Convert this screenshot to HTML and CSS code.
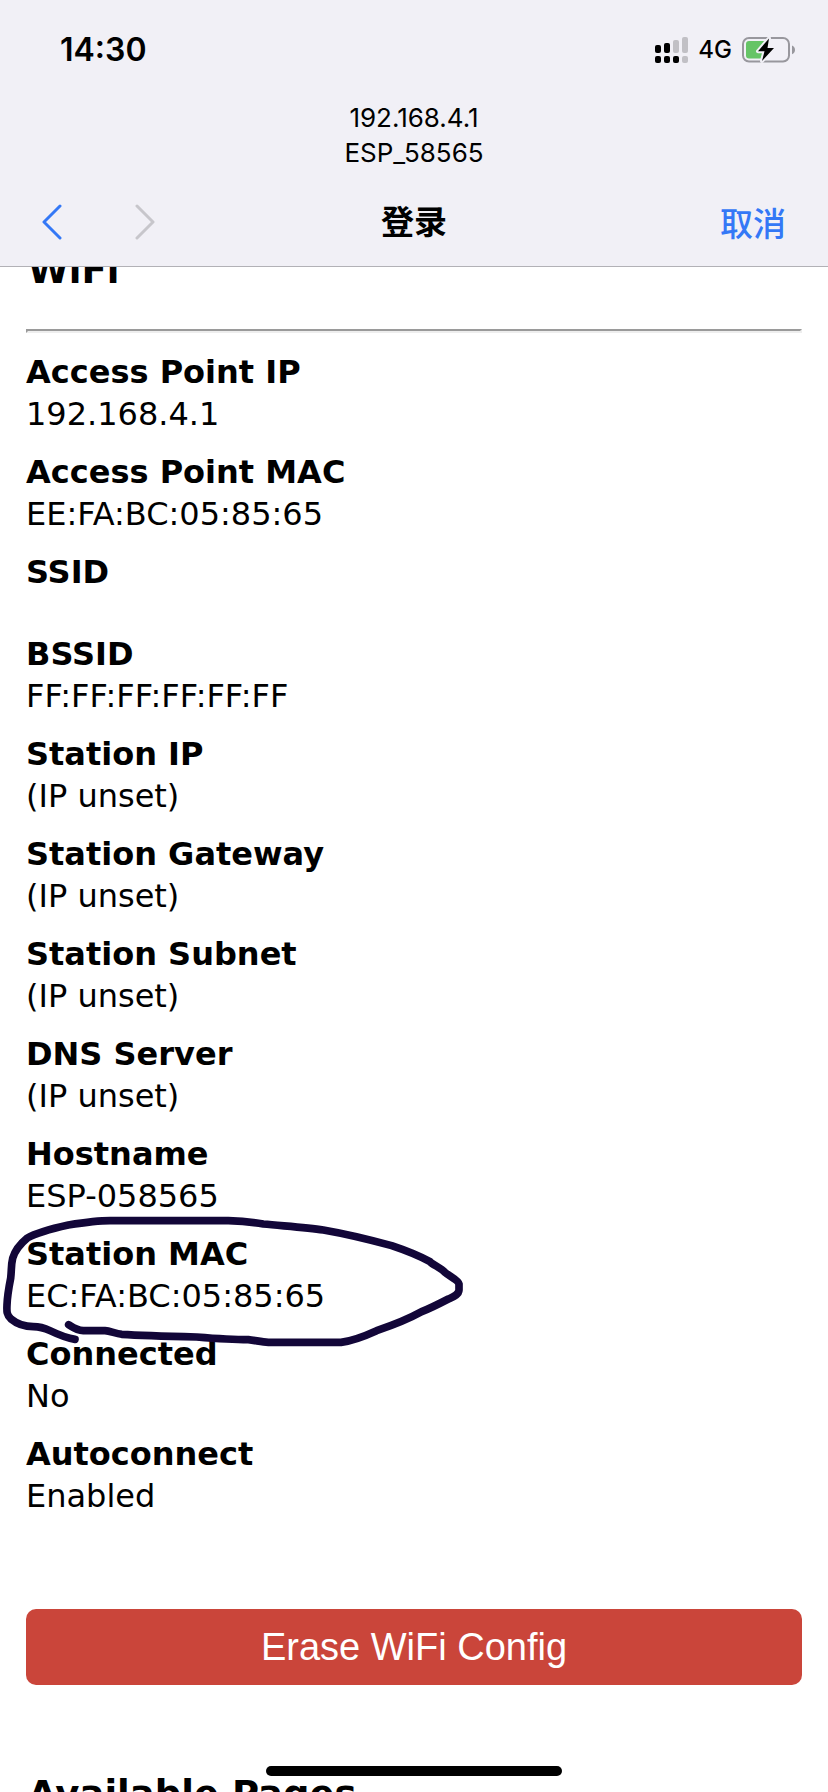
FILE: index.html
```html
<!DOCTYPE html>
<html lang="zh-CN">
<head>
<meta charset="utf-8">
<meta name="viewport" content="width=device-width">
<title>登录</title>
<link rel="stylesheet" href="styles.css">
</head>
<body>
<header class="top">
  <div class="status">
    <time class="clock">14:30</time>
    <div class="indicators">
      <svg class="signal" viewBox="0 0 33 26" aria-hidden="true">
        <g fill="#000"><rect x="0" y="8" width="6" height="8" rx="2"/><rect x="9" y="6" width="6" height="10" rx="2"/><rect x="0" y="19" width="6" height="7" rx="2"/><rect x="9" y="19" width="6" height="7" rx="2"/><rect x="18" y="19" width="6" height="7" rx="2"/></g>
        <g fill="#c1c0c5"><rect x="18" y="3" width="6" height="13" rx="2"/><rect x="27" y="0" width="6" height="16" rx="2"/><rect x="27" y="19" width="6" height="7" rx="2"/></g>
      </svg>
      <span class="network">4G</span>
      <svg class="battery" viewBox="0 0 54 26" aria-hidden="true">
        <rect x="1" y="1" width="46" height="23.5" rx="6" fill="none" stroke="#98979d" stroke-width="2"/>
        <path d="M50 8.5c4 1.200 4 7.600 0 8.800z" fill="#98979d"/>
        <rect x="4" y="4" width="20" height="17.500" rx="3" fill="#65c466"/>
        <path d="M27 1.500L16 14.200h6.500L20 24 32 11h-6.500z" fill="#000" stroke="#f1f0f6" stroke-width="4" stroke-linejoin="round" paint-order="stroke"/>
      </svg>
    </div>
  </div>
  <div class="network-name">
    <div>192.168.4.1</div>
    <div>ESP_58565</div>
  </div>
  <nav class="nav">
    <div class="arrows">
      <button class="arrow" type="button" aria-label="后退"><svg viewBox="0 0 20 36"><path d="M18 2L2 18l16 16"/></svg></button>
      <button class="arrow" type="button" aria-label="前进" disabled><svg viewBox="0 0 20 36"><path d="M2 2l16 16L2 34"/></svg></button>
    </div>
    <h1 class="title">登录</h1>
    <button class="cancel" type="button">取消</button>
  </nav>
</header>
<main class="page">
  <h2 class="heading">WiFi</h2>
  <hr class="rule">
  <dl class="info">
    <div class="item"><dt>Access Point IP</dt><dd>192.168.4.1</dd></div>
    <div class="item"><dt>Access Point MAC</dt><dd>EE:FA:BC:05:85:65</dd></div>
    <div class="item"><dt>SSID</dt><dd></dd></div>
    <div class="item"><dt>BSSID</dt><dd>FF:FF:FF:FF:FF:FF</dd></div>
    <div class="item"><dt>Station IP</dt><dd>(IP unset)</dd></div>
    <div class="item"><dt>Station Gateway</dt><dd>(IP unset)</dd></div>
    <div class="item"><dt>Station Subnet</dt><dd>(IP unset)</dd></div>
    <div class="item"><dt>DNS Server</dt><dd>(IP unset)</dd></div>
    <div class="item"><dt>Hostname</dt><dd>ESP-058565</dd></div>
    <div class="item marked"><dt>Station MAC</dt><dd>EC:FA:BC:05:85:65</dd>
      <svg class="ink" viewBox="0 0 1440 660" aria-hidden="true"><path d="M225 418C202 415 175 404 150 392C135 385 120 380 100 380C75 380 50 371 33 357C20 345 20 335 21 315C22 290 27 260 32 235C35 210 33 195 38 175C45 150 65 128 82 114C110 98 160 85 205 75C250 68 290 62 330 62L685 62C720 63 755 66 790 72C850 78 920 83 970 90C1040 102 1120 122 1175 137C1220 152 1255 166 1290 185C1300 195 1322 203 1335 217C1350 230 1375 240 1377 252L1377 270C1376 285 1360 290 1345 297C1320 310 1290 325 1265 335C1220 360 1180 375 1130 392C1095 408 1060 422 1023 427L805 427C785 426 765 421 745 419C690 419 640 415 590 411C510 409 430 407 365 403C345 400 330 393 315 392L250 392C230 391 217 381 206 374"/></svg>
    </div>
    <div class="item"><dt>Connected</dt><dd>No</dd></div>
    <div class="item"><dt>Autoconnect</dt><dd>Enabled</dd></div>
  </dl>
  <button class="erase" type="button">Erase WiFi Config</button>
  <h2 class="heading next">Available Pages</h2>
</main>
<div class="home-bar"></div>
</body>
</html>
```

FILE: styles.css
```css
* { box-sizing: border-box; }

body {
  margin: 0;
  height: 100vh;
  overflow: hidden;
  background: #fff;
  color: #000;
  font: 32px/42px "DejaVu Sans", sans-serif;
}

button {
  margin: 0;
  padding: 0;
  border: 0;
  background: none;
}

.top {
  position: sticky;
  top: 0;
  z-index: 1;
  background: #f1f0f6;
  border-bottom: 1px solid #b2b1b6;
  font-family: Inter, "Noto Sans CJK SC", sans-serif;
}

.status {
  display: flex;
  justify-content: space-between;
  align-items: center;
  height: 100px;
  padding: 0 32px 0 60px;
}

.clock { font-size: 32px; font-weight: 600; }

.indicators { display: flex; align-items: center; gap: 10px; }
.signal { width: 33px; height: 26px; }
.network { font-size: 24px; font-weight: 500; }
.battery { width: 54px; height: 26px; }

.network-name {
  font-size: 26px;
  line-height: 35px;
  text-align: center;
}

.nav {
  display: grid;
  grid-template-columns: 1fr auto 1fr;
  align-items: center;
  height: 96px;
  padding: 8px 42px 0;
}

.arrows { display: flex; gap: 73px; }
.arrow { display: flex; }
.arrow svg { width: 20px; height: 36px; }
.arrow path {
  fill: none;
  stroke: #3478f6;
  stroke-width: 3;
  stroke-linecap: round;
  stroke-linejoin: round;
}
.arrow:disabled path { stroke: #c7c6cb; }

.title { margin: 0; font-size: 33px; font-weight: 700; }

.cancel {
  justify-self: end;
  color: #3478f6;
  font: 500 33px/42px "Noto Sans CJK SC", sans-serif;
}

.page {
  display: flow-root;
  margin-top: -18px;
  padding: 0 26px;
}

.heading {
  margin: 0 2px;
  font-size: 37px;
  line-height: 44px;
}
.heading.next { margin-top: 88px; }

.rule {
  height: 4px;
  margin: 36px 0 18px;
  border: 2px solid;
  border-color: #9a9a9a #eee #eee #9a9a9a;
}

.info { margin: 0; }
.item { padding-bottom: 16px; }
.item dt { font-weight: 700; }
.item dd { margin: 0; min-height: 24px; }

.marked { position: relative; }
.ink {
  position: absolute;
  left: -26px;
  top: -33px;
  width: 480px;
  height: 220px;
}
.ink path {
  fill: none;
  stroke: #120638;
  stroke-width: 23;
  stroke-linecap: round;
  stroke-linejoin: round;
}

.erase {
  display: block;
  width: 100%;
  margin-top: 76px;
  padding: 16px 0;
  border-radius: 10px;
  background: #ca453a;
  color: #fff;
  font: 38px/44px "Liberation Sans", sans-serif;
}

.home-bar {
  position: fixed;
  bottom: 16px;
  left: 50%;
  width: 296px;
  height: 10px;
  border-radius: 5px;
  background: #000;
  transform: translateX(-50%);
}
```
